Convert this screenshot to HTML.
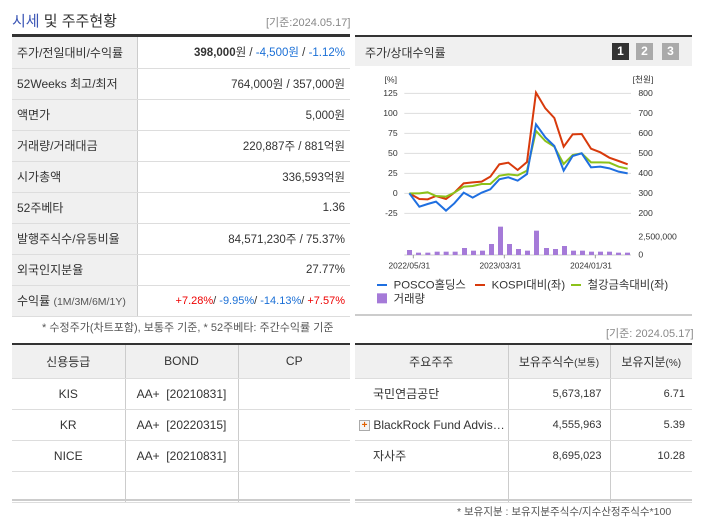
<!DOCTYPE html>
<html><head><meta charset="utf-8"><style>
*{margin:0;padding:0;box-sizing:border-box}
body{width:702px;height:525px;background:#fff;font-family:"Liberation Sans","Noto Sans CJK KR",sans-serif;font-size:12px;color:#333;position:relative;overflow:hidden}
.a{position:absolute}
table{border-collapse:collapse;position:absolute}
td{font-size:12px;color:#333}
.lt td{height:31px;border-bottom:1px solid #ddd;padding:0 5px}
.lt td.l{background:#f0f0f0;border-right:1px solid #ccc;width:125px;color:#333}
.lt td.r{text-align:right;font-size:11.5px;color:#333}
.bt td{border-right:1px solid #ccc;border-bottom:1px solid #ddd;text-align:center;height:31px}
.bt td:last-child{border-right:none}
.bt tr.h td{background:#f0f0f0;height:33px}
</style></head><body>
<div class="a" style="left:12px;top:10px;font-size:15px;color:#333"><span style="color:#3a55b5">시세</span> 및 주주현황</div>
<div class="a" style="left:266px;top:14px;font-size:11px;color:#888">[기준:2024.05.17]</div>
<div class="a" style="left:12px;top:34px;width:338px;height:3px;background:#333"></div>
<table class="lt" style="left:12px;top:37px;width:338px">
<tr><td class="l">주가/전일대비/수익률</td><td class="r"><b>398,000</b>원 / <span style="color:#1a6fd6">-4,500원</span> / <span style="color:#1a6fd6">-1.12%</span></td></tr>
<tr><td class="l">52Weeks 최고/최저</td><td class="r">764,000원 / 357,000원</td></tr>
<tr><td class="l">액면가</td><td class="r">5,000원</td></tr>
<tr><td class="l">거래량/거래대금</td><td class="r">220,887주 / 881억원</td></tr>
<tr><td class="l">시가총액</td><td class="r">336,593억원</td></tr>
<tr><td class="l">52주베타</td><td class="r">1.36</td></tr>
<tr><td class="l">발행주식수/유동비율</td><td class="r">84,571,230주 / 75.37%</td></tr>
<tr><td class="l">외국인지분율</td><td class="r">27.77%</td></tr>
<tr><td class="l">수익률 <span style="font-size:10.5px;color:#555">(1M/3M/6M/1Y)</span></td><td class="r" style="font-size:11px"><span style="color:#e00">+7.28%</span>/ <span style="color:#1a6fd6">-9.95%</span>/ <span style="color:#1a6fd6">-14.13%</span>/ <span style="color:#e00">+7.57%</span></td></tr>
</table>
<div class="a" style="left:42px;top:319px;font-size:11px;color:#555">* 수정주가(차트포함), 보통주 기준, * 52주베타: 주간수익률 기준</div>

<div class="a" style="left:355px;top:35px;width:337px;height:2px;background:#333"></div>
<div class="a" style="left:355px;top:37px;width:337px;height:29px;background:#f0f0f0"></div>
<div class="a" style="left:365px;top:44px;font-size:12px">주가/상대수익률</div>
<div class="a" style="left:612px;top:43px;width:17px;height:17px;background:#333;color:#fff;font-weight:bold;font-size:12px;text-align:center;line-height:17px">1</div>
<div class="a" style="left:636px;top:43px;width:17px;height:17px;background:#aaa;color:#fff;font-weight:bold;font-size:12px;text-align:center;line-height:17px">2</div>
<div class="a" style="left:662px;top:43px;width:17px;height:17px;background:#aaa;color:#fff;font-weight:bold;font-size:12px;text-align:center;line-height:17px">3</div>
<svg class="a" style="left:351px;top:30px" width="351" height="280" viewBox="0 0 1053 840" font-family="Liberation Sans, Noto Sans CJK KR, sans-serif" font-size="26" fill="#333">
<g stroke="#ddd" stroke-width="3"><line x1="160" y1="190" x2="840" y2="190"/><line x1="160" y1="250" x2="840" y2="250"/><line x1="160" y1="310" x2="840" y2="310"/><line x1="160" y1="370" x2="840" y2="370"/><line x1="160" y1="430" x2="840" y2="430"/><line x1="160" y1="490" x2="840" y2="490"/><line x1="160" y1="550" x2="840" y2="550"/></g>
<line x1="160" y1="675" x2="840" y2="675" stroke="#ccc" stroke-width="3"/>
<g text-anchor="end"><text x="138" y="158">[%]</text><text x="140" y="198">125</text><text x="140" y="258">100</text><text x="140" y="318">75</text><text x="140" y="378">50</text><text x="140" y="438">25</text><text x="140" y="498">0</text><text x="140" y="558">-25</text></g>
<g><text x="845" y="158">[천원]</text><text x="862" y="198">800</text><text x="862" y="258">700</text><text x="862" y="318">600</text><text x="862" y="378">500</text><text x="862" y="438">400</text><text x="862" y="498">300</text><text x="862" y="558">200</text><text x="862" y="628">2,500,000</text><text x="862" y="683">0</text></g>
<g fill="#a57ad8"><rect x="168" y="660" width="15" height="15"/><rect x="195" y="668" width="15" height="7"/><rect x="223" y="668" width="15" height="7"/><rect x="251" y="665" width="15" height="10"/><rect x="278" y="665" width="15" height="10"/><rect x="305" y="665" width="15" height="10"/><rect x="333" y="654" width="15" height="21"/><rect x="360" y="662" width="15" height="13"/><rect x="387" y="662" width="15" height="13"/><rect x="414" y="642" width="15" height="33"/><rect x="441" y="590" width="15" height="85"/><rect x="468" y="642" width="15" height="33"/><rect x="495" y="657" width="15" height="18"/><rect x="522" y="662" width="15" height="13"/><rect x="549" y="602" width="15" height="73"/><rect x="579" y="654" width="15" height="21"/><rect x="606" y="657" width="15" height="18"/><rect x="633" y="648" width="15" height="27"/><rect x="660" y="662" width="15" height="13"/><rect x="687" y="662" width="15" height="13"/><rect x="714" y="665" width="15" height="10"/><rect x="741" y="665" width="15" height="10"/><rect x="768" y="665" width="15" height="10"/><rect x="795" y="668" width="15" height="7"/><rect x="822" y="668" width="15" height="7"/></g>
<polyline fill="none" stroke="#d83a0c" stroke-width="6" points="175,490 205,507 230,508 255,498 285,507 310,488 338,460 365,457 392,455 418,440 445,403 472,398 500,420 528,396 555,188 583,235 610,264 638,350 665,313 692,312 720,356 748,367 775,383 803,393 830,403"/>
<polyline fill="none" stroke="#8cc21a" stroke-width="6" points="175,490 205,490 230,487 255,498 285,500 310,488 338,470 365,468 392,462 418,462 445,437 472,433 500,436 528,422 555,303 583,333 610,350 638,402 665,375 692,370 720,397 748,397 775,398 803,410 830,416"/>
<polyline fill="none" stroke="#1f6fe0" stroke-width="6" points="175,490 205,530 230,522 255,515 285,542 310,520 338,488 365,503 392,488 418,478 445,448 472,442 500,452 528,432 555,283 583,322 610,348 638,422 665,378 692,370 720,412 748,410 775,415 803,425 830,430"/>
<g stroke="#999" stroke-width="3"><line x1="187" y1="675" x2="187" y2="685"/><line x1="460" y1="675" x2="460" y2="685"/><line x1="733" y1="675" x2="733" y2="685"/></g>
<g text-anchor="middle" font-size="25"><text x="175" y="715">2022/05/31</text><text x="448" y="715">2023/03/31</text><text x="720" y="715">2024/01/31</text></g>
<g font-size="34"><rect x="78" y="762" width="30" height="6" fill="#1f6fe0"/><text x="128" y="775">POSCO홀딩스</text><rect x="372" y="762" width="30" height="6" fill="#d83a0c"/><text x="422" y="775">KOSPI대비(좌)</text><rect x="660" y="762" width="30" height="6" fill="#8cc21a"/><text x="710" y="775">철강금속대비(좌)</text><rect x="78" y="790" width="30" height="30" fill="#a57ad8"/><text x="128" y="818">거래량</text></g>
</svg>
<div class="a" style="left:355px;top:314px;width:337px;height:2px;background:#ccc"></div>
<div class="a" style="left:606px;top:325px;font-size:11px;color:#888">[기준: 2024.05.17]</div>

<div class="a" style="left:12px;top:343px;width:338px;height:2px;background:#333"></div>
<table class="bt" style="left:12px;top:345px;width:338px">
<tr class="h"><td style="width:113px">신용등급</td><td style="width:113px">BOND</td><td>CP</td></tr>
<tr><td>KIS</td><td>AA+ &nbsp;[20210831]</td><td></td></tr>
<tr><td>KR</td><td>AA+ &nbsp;[20220315]</td><td></td></tr>
<tr><td>NICE</td><td>AA+ &nbsp;[20210831]</td><td></td></tr>
<tr><td></td><td></td><td></td></tr>
</table>
<div class="a" style="left:12px;top:499px;width:338px;height:2px;background:#ccc"></div>

<div class="a" style="left:355px;top:343px;width:337px;height:2px;background:#333"></div>
<table class="bt" style="left:355px;top:345px;width:337px">
<tr class="h"><td style="width:153px">주요주주</td><td style="width:102px">보유주식수<span style="font-size:10px">(보통)</span></td><td>보유지분<span style="font-size:10px">(%)</span></td></tr>
<tr><td style="text-align:left;padding-left:18px">국민연금공단</td><td style="text-align:right;padding-right:8px;font-size:11px">5,673,187</td><td style="text-align:right;padding-right:7px;font-size:11px">6.71</td></tr>
<tr><td style="text-align:left;padding-left:4px;white-space:nowrap"><span style="display:inline-block;width:11px;height:11px;border:1px solid #aaa;background:#f4f4f4;color:#e06000;font-size:10px;line-height:9px;text-align:center;font-weight:bold;vertical-align:middle">+</span> BlackRock Fund Advis…</td><td style="text-align:right;padding-right:8px;font-size:11px">4,555,963</td><td style="text-align:right;padding-right:7px;font-size:11px">5.39</td></tr>
<tr><td style="text-align:left;padding-left:18px">자사주</td><td style="text-align:right;padding-right:8px;font-size:11px">8,695,023</td><td style="text-align:right;padding-right:7px;font-size:11px">10.28</td></tr>
<tr><td></td><td></td><td></td></tr>
</table>
<div class="a" style="left:355px;top:499px;width:337px;height:2px;background:#ccc"></div>
<div class="a" style="left:457px;top:504px;font-size:10.5px;color:#555">* 보유지분 : 보유지분주식수/지수산정주식수*100</div>
</body></html>
